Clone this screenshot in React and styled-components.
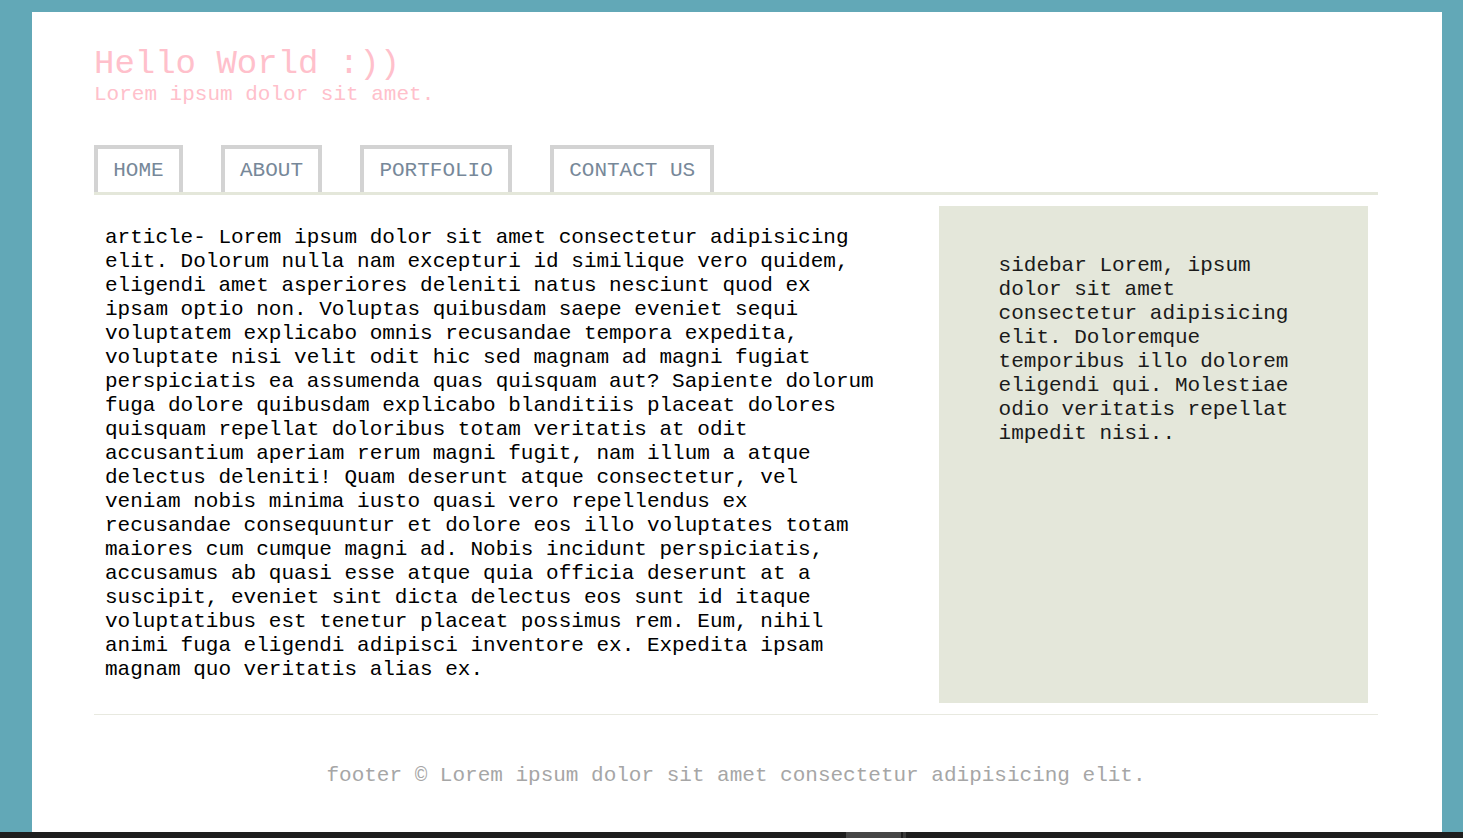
import React from "react";
import styled, { createGlobalStyle } from "styled-components";

const navItems = ["HOME", "ABOUT", "PORTFOLIO", "CONTACT US"];

const articleText =
  "article- Lorem ipsum dolor sit amet consectetur adipisicing elit. Dolorum nulla nam excepturi id similique vero quidem, eligendi amet asperiores deleniti natus nesciunt quod ex ipsam optio non. Voluptas quibusdam saepe eveniet sequi voluptatem explicabo omnis recusandae tempora expedita, voluptate nisi velit odit hic sed magnam ad magni fugiat perspiciatis ea assumenda quas quisquam aut? Sapiente dolorum fuga dolore quibusdam explicabo blanditiis placeat dolores quisquam repellat doloribus totam veritatis at odit accusantium aperiam rerum magni fugit, nam illum a atque delectus deleniti! Quam deserunt atque consectetur, vel veniam nobis minima iusto quasi vero repellendus ex recusandae consequuntur et dolore eos illo voluptates totam maiores cum cumque magni ad. Nobis incidunt perspiciatis, accusamus ab quasi esse atque quia officia deserunt at a suscipit, eveniet sint dicta delectus eos sunt id itaque voluptatibus est tenetur placeat possimus rem. Eum, nihil animi fuga eligendi adipisci inventore ex. Expedita ipsam magnam quo veritatis alias ex.";

const sidebarText =
  "sidebar Lorem, ipsum dolor sit amet consectetur adipisicing elit. Doloremque temporibus illo dolorem eligendi qui. Molestiae odio veritatis repellat impedit nisi..";

function App() {
  return (
    <>
      <GlobalStyle />
      <Page>
        <Inner>
          <Header>
            <Title>Hello World :))</Title>
            <Subtitle>Lorem ipsum dolor sit amet.</Subtitle>
          </Header>
          <Nav>
            {navItems.map((item) => (
              <NavLink key={item} href="#">
                {item}
              </NavLink>
            ))}
          </Nav>
          <Main>
            <Article>{articleText}</Article>
            <Sidebar>{sidebarText}</Sidebar>
          </Main>
          <Footer>footer © Lorem ipsum dolor sit amet consectetur adipisicing elit.</Footer>
        </Inner>
      </Page>
      <ScrollBar>
        <Thumb />
        <ThumbEnd />
      </ScrollBar>
    </>
  );
}

export default App;

const GlobalStyle = createGlobalStyle`
  * {
    box-sizing: border-box;
  }
  body {
    margin: 0;
    background: #62a8b7;
    font-family: "Liberation Mono", "Courier New", monospace;
    font-size: 21px;
    overflow: hidden;
  }
`;

const Page = styled.div`
  background: #fff;
  margin: 12px 21px 0 32px;
  min-height: calc(100vh - 12px);
`;

const Inner = styled.div`
  padding: 0 64px 0 62px;
`;

const Header = styled.header`
  padding-top: 33px;
`;

const Title = styled.h1`
  margin: 0;
  font-size: 34px;
  font-weight: normal;
  color: #ffc0cb;
  line-height: 38px;
`;

const Subtitle = styled.p`
  margin: 0;
  font-size: 21px;
  color: #ffc0cb;
  line-height: 24px;
`;

const Nav = styled.nav`
  display: flex;
  gap: 38px;
  margin-top: 38px;
  border-bottom: 3px solid #e4e7da;
`;

const NavLink = styled.a`
  display: block;
  padding: 10px 15.2px 9px;
  border: 4px solid #d3d3d3;
  border-bottom: none;
  color: #778899;
  text-decoration: none;
  line-height: 24px;
`;

const Main = styled.main`
  display: flex;
  align-items: stretch;
  padding-top: 11px;
`;

const Article = styled.article`
  width: 65%;
  padding: 20px 50px 21px 11px;
  line-height: 24px;
  color: #000;
`;

const Sidebar = styled.aside`
  width: calc(35% - 20px);
  margin: 0 10px;
  padding: 48px 60px 20px;
  background: #e4e7da;
  line-height: 24px;
  color: #1a1a1a;
`;

const Footer = styled.footer`
  margin-top: 11px;
  border-top: 1px solid #e8e9e0;
  padding: 49px 0 60px;
  text-align: center;
  color: #a6a6a6;
  line-height: 24px;
`;

const ScrollBar = styled.div`
  position: fixed;
  left: 0;
  right: 0;
  bottom: 0;
  height: 6px;
  background: #1e1e1e;
  display: flex;
  padding-left: 846px;
`;

const Thumb = styled.div`
  width: 55px;
  background: #464646;
`;

const ThumbEnd = styled.div`
  width: 3px;
  margin-left: 2px;
  background: #3a3a3a;
`;
